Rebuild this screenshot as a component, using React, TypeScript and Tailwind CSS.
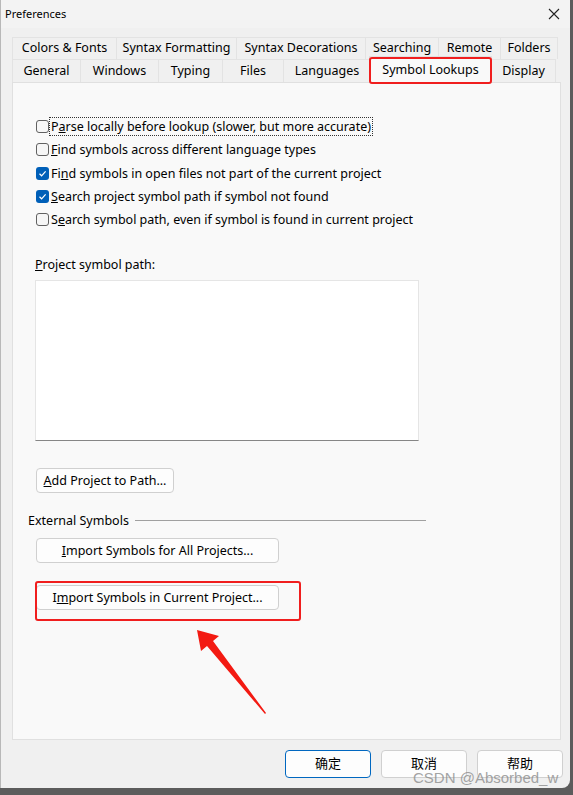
import React from 'react';

const font = { fontFamily: '"Noto Sans", "Noto Sans CJK SC", sans-serif' };

type Tab = { label: string; w: number; active?: boolean };

const topTabs: Tab[] = [
    { label: 'Colors & Fonts', w: 104 },
    { label: 'Syntax Formatting', w: 120 },
    { label: 'Syntax Decorations', w: 129 },
    { label: 'Searching', w: 73 },
    { label: 'Remote', w: 62 },
    { label: 'Folders', w: 58 },
];

const bottomTabs: Tab[] = [
    { label: 'General', w: 68 },
    { label: 'Windows', w: 78 },
    { label: 'Typing', w: 64 },
    { label: 'Files', w: 61 },
    { label: 'Languages', w: 87 },
    { label: 'Symbol Lookups', w: 123, active: true },
    { label: 'Display', w: 65 },
];

const Checkbox = ({ checked }: { checked?: boolean }) =>
    checked ? (
        <span className="w-[13px] h-[13px] rounded-[3px] bg-[#005fb8] flex items-center justify-center shrink-0">
            <svg width="9" height="9" viewBox="0 0 9 9">
                <path d="M1.5 4.8 L3.6 6.8 L7.6 2.4" fill="none" stroke="#fff" strokeWidth="1.2" />
            </svg>
        </span>
    ) : (
        <span className="w-[13px] h-[13px] rounded-[3px] border border-[#616161] bg-[#f6f6f6] shrink-0" />
    );

const Button = ({ children, className = '' }: { children: React.ReactNode; className?: string }) => (
    <div className={`h-[25px] flex items-center justify-center bg-[#fdfdfd] border border-[#d0d0d0] rounded-[4px] text-[12.5px] text-black ${className}`}>
        {children}
    </div>
);

const options = [
    { checked: false, text: <>P<u>a</u>rse locally before lookup (slower, but more accurate)</>, focus: true },
    { checked: false, text: <><u>F</u>ind symbols across different language types</> },
    { checked: true, text: <>Fi<u>n</u>d symbols in open files not part of the current project</> },
    { checked: true, text: <><u>S</u>earch project symbol path if symbol not found</> },
    { checked: false, text: <>S<u>e</u>arch symbol path, even if symbol is found in current project</> },
];

const App = () => {
    return (
        <div className="w-[573px] h-[795px] bg-[#5c5c5c] overflow-hidden" style={font}>
            <div className="w-[570px] h-[788px] bg-[#f0f0f0] rounded-br-[8px] border-l border-[#b8b8b8] flex flex-col relative">

                {/* Title bar */}
                <div className="h-[28px] bg-[#f3f3f3] flex items-center justify-between pl-[4px] pr-[10px]">
                    <span className="text-[11px] text-black">Preferences</span>
                    <svg width="12" height="12" viewBox="0 0 12 12">
                        <path d="M1 1 L11 11 M11 1 L1 11" stroke="#222" strokeWidth="1.1" />
                    </svg>
                </div>

                {/* Tabs */}
                <div className="pl-[11px] pt-[9px]">
                    <div className="flex h-[22px]">
                        {topTabs.map((t) => (
                            <div key={t.label} style={{ width: t.w }}
                                 className="border border-r-0 last:border-r border-b-0 border-[#e3e3e3] bg-[#f0f0f0] flex items-center justify-center text-[12.5px] text-black">
                                {t.label}
                            </div>
                        ))}
                    </div>
                    <div className="flex h-[23px]">
                        {bottomTabs.map((t) =>
                            t.active ? (
                                <div key={t.label} style={{ width: t.w }}
                                     className="relative -mt-[3px] h-[27px] mx-[-1px] z-10 border border-b-0 border-[#e0e0e0] bg-[#f9f9f9] flex items-center justify-center text-[12.5px] text-black">
                                    {t.label}
                                    <div className="absolute -left-[1px] -right-[1px] top-0 -bottom-[1px] border-2 border-[#f01e1e] rounded-[3px]" />
                                </div>
                            ) : (
                                <div key={t.label} style={{ width: t.w }}
                                     className="border border-r-0 last:border-r border-b-0 border-[#e3e3e3] bg-[#f0f0f0] flex items-center justify-center text-[12.5px] text-black">
                                    {t.label}
                                </div>
                            )
                        )}
                    </div>
                </div>

                {/* Panel */}
                <div className="ml-[11px] w-[549px] h-[658px] bg-[#f9f9f9] border border-[#e0e0e0] relative">
                    <div className="pt-[32px] pl-[23px] flex flex-col">
                        {options.map((o, i) => (
                            <div key={i} className="flex items-center gap-[1px] h-[23.3px]">
                                <Checkbox checked={o.checked} />
                                <span className={`text-[12.5px] text-black leading-[17px] px-[1px] ${o.focus ? 'outline outline-1 outline-dotted outline-[#333]' : ''}`}>
                                    {o.text}
                                </span>
                            </div>
                        ))}
                    </div>

                    <div className="pl-[22px] mt-[25px] text-[12.5px] text-black leading-[17px]">
                        <u>P</u>roject symbol path:
                    </div>
                    <div className="ml-[22px] mt-[7px] w-[384px] h-[161px] bg-white border border-[#e5e5e5] border-b-[#868686]" />

                    <Button className="ml-[23px] mt-[27px] w-[138px]">
                        <u>A</u>dd Project to Path...
                    </Button>

                    <div className="flex items-center ml-[15px] mt-[19px] w-[398px] gap-[6px]">
                        <span className="text-[12.5px] text-black leading-[17px] whitespace-nowrap">External Symbols</span>
                        <div className="flex-1 h-px bg-[#a0a0a0]" />
                    </div>

                    <Button className="ml-[23px] mt-[9px] w-[243px]">
                        <u>I</u>mport Symbols for All Projects...
                    </Button>

                    <div className="relative ml-[23px] mt-[22px] w-[243px]">
                        <Button className="w-[243px]">
                            I<u>m</u>port Symbols in Current Project...
                        </Button>
                        <div className="absolute -left-[1px] -top-[4px] w-[266px] h-[40px] border-2 border-[#f01e1e] rounded-[3px]" />
                    </div>

                    {/* Annotation arrow */}
                    <svg className="absolute left-[178px] top-[540px]" width="90" height="95" viewBox="0 0 90 95">
                        <path d="M6 7 L28 13 L22 18 L75 90 L74 91 L16 23 L10 28 Z" fill="#f31a12" />
                    </svg>
                </div>

                {/* Dialog buttons */}
                <div className="flex justify-end gap-[10px] pr-[7px] mt-[10px]">
                    <div className="w-[86px] h-[28px] rounded-[4px] border border-[#0067c0] bg-[#fdfdfd] flex items-center justify-center text-[13px] text-black">确定</div>
                    <div className="w-[86px] h-[28px] rounded-[4px] border border-[#d0d0d0] bg-[#fdfdfd] flex items-center justify-center text-[13px] text-black">取消</div>
                    <div className="w-[86px] h-[28px] rounded-[4px] border border-[#d0d0d0] bg-[#fdfdfd] flex items-center justify-center text-[13px] text-black">帮助</div>
                </div>

                {/* Watermark */}
                <span className="absolute left-[412px] top-[768px] text-[15px] text-[#8c8c8c]/80 leading-[20px]"
                      style={{ fontFamily: '"Liberation Sans", sans-serif' }}>
                    CSDN @Absorbed_w
                </span>
            </div>
        </div>
    );
};

export default App;
